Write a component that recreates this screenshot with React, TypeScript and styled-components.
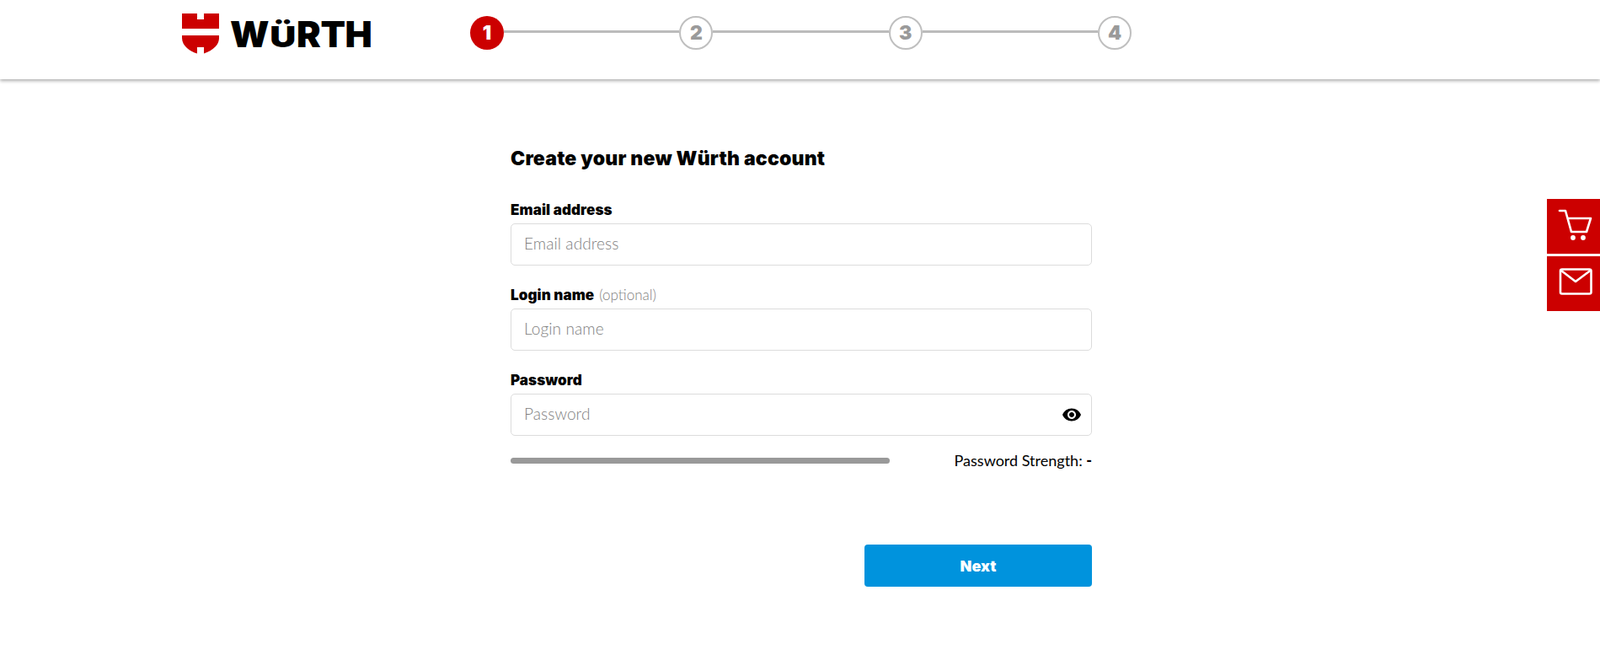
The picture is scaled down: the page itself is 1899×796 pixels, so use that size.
import React from "react";
import styled, { createGlobalStyle } from "styled-components";

const Global = createGlobalStyle`
  html, body { margin: 0; padding: 0; background: #fff; }
  body { font-family: "Lato", "Open Sans", sans-serif; color: #000; }
  * { box-sizing: border-box; }
`;

const Header = styled.header`
  height: 94px;
  display: flex;
  align-items: flex-start;
  padding: 16px 0 0 216px;
  background: #fff;
  box-shadow: 0 2px 4px rgba(0, 0, 0, 0.32);
`;

const Logo = styled.div`
  width: 342px;
  display: flex;
  align-items: flex-start;
  gap: 13px;
`;

const Wordmark = styled.div`
  display: flex;
  height: 31px;
  margin-top: 9px;
  font-family: "Inter", sans-serif;
  font-weight: 900;
  font-size: 43px;
  line-height: 31px;
  letter-spacing: -0.3px;
`;

const Umlaut = styled.span`
  display: inline-block;
  transform: scaleY(0.8);
  transform-origin: 50% 100%;
  margin: 0 1px;
`;

const Stepper = styled.ol`
  list-style: none;
  margin: 3px 0 0;
  padding: 0;
  display: flex;
  align-items: flex-start;
`;

const Step = styled.li<{ $active?: boolean }>`
  width: 40px;
  height: 40px;
  border-radius: 50%;
  display: flex;
  align-items: center;
  justify-content: center;
  font-family: "Inter", sans-serif;
  font-weight: 900;
  font-size: 23px;
  background: ${(p) => (p.$active ? "#cc0000" : "#fff")};
  color: ${(p) => (p.$active ? "#fff" : "#9a9a9a")};
  border: ${(p) => (p.$active ? "none" : "2px solid #bfbfbf")};
`;

const Connector = styled.li`
  width: 208.4px;
  height: 3px;
  margin-top: 17px;
  background: #bbbbbb;
`;

const Main = styled.main`
  width: 690px;
  margin: 0 0 0 606px;
  padding-top: 79px;
`;

const Title = styled.h1`
  margin: 0 0 35px;
  font-family: "Inter", sans-serif;
  font-size: 23px;
  line-height: 30px;
  font-weight: 900;
  letter-spacing: 0.2px;
`;

const Field = styled.div`
  margin-bottom: 24px;
`;

const Label = styled.label`
  display: block;
  height: 27px;
  font-family: "Inter", sans-serif;
  font-size: 17px;
  line-height: 22px;
  font-weight: 900;
  letter-spacing: 0.1px;
`;

const Optional = styled.span`
  font-family: "Lato", sans-serif;
  font-size: 17px;
  font-weight: 300;
  color: #808080;
  margin-left: 6px;
  letter-spacing: 0;
`;

const InputBox = styled.div`
  height: 50px;
  display: flex;
  align-items: center;
  padding: 0 11px 3px 15px;
  border: 1px solid #dcdcdc;
  border-radius: 5px;
`;

const Input = styled.input`
  flex: 1;
  min-width: 0;
  border: 0;
  outline: 0;
  padding: 0;
  background: transparent;
  font-family: inherit;
  font-size: 19px;
  font-weight: 300;
  letter-spacing: 0.1px;
  color: #000;
  &::placeholder { color: #808080; opacity: 1; }
`;

const EyeSlot = styled.span`
  display: flex;
  margin-bottom: -3px;
`;

const StrengthRow = styled.div`
  margin-top: -6px;
  display: flex;
  align-items: center;
  justify-content: space-between;
  height: 22px;
`;

const StrengthBar = styled.div`
  width: 450px;
  height: 7px;
  border-radius: 4px;
  background: #999;
`;

const StrengthText = styled.div`
  font-size: 18px;
  font-weight: 400;
  line-height: 20px;
  letter-spacing: 0;
  b { font-weight: 900; }
`;

const Actions = styled.div`
  margin-top: 89px;
  display: flex;
  justify-content: flex-end;
`;

const NextButton = styled.button`
  width: 270px;
  height: 50px;
  border: 0;
  border-radius: 4px;
  background: #0093dd;
  color: #fff;
  font-family: "Inter", sans-serif;
  font-size: 18px;
  font-weight: 900;
`;

const SideRail = styled.aside`
  position: fixed;
  top: 236px;
  right: 0;
  display: flex;
  flex-direction: column;
  gap: 3px;
`;

const SideButton = styled.div`
  width: 63px;
  height: 65px;
  background: #cc0000;
  svg { display: block; }
`;

const WurthShield = () => (
  <svg width="44" height="48" viewBox="216 16 44 48" aria-hidden="true">
    <path fill="#cc0000" d="M216 16H234V23H242V16H260V34H216Z" />
    <path fill="#cc0000" d="M216 42H260V45C260 55 250 61 242 63.5V56H234V63.5C226 61 216 55 216 45Z" />
  </svg>
);

const EyeIcon = () => (
  <svg width="24" height="24" viewBox="0 0 24 24" aria-hidden="true">
    <path
      fill="#000"
      d="M12 4.5C7 4.5 2.73 7.61 1 12c1.73 4.39 6 7.5 11 7.5s9.27-3.11 11-7.5c-1.73-4.39-6-7.5-11-7.5zM12 17c-2.76 0-5-2.24-5-5s2.24-5 5-5 5 2.24 5 5-2.24 5-5 5zm0-8c-1.66 0-3 1.34-3 3s1.34 3 3 3 3-1.34 3-3-1.34-3-3-3z"
    />
  </svg>
);

const CartIcon = () => (
  <svg width="63" height="65" viewBox="0 0 63 65" fill="none" stroke="#fff" strokeWidth="2.6" strokeLinejoin="round" strokeLinecap="round">
    <path d="M15 14H22L29 39H47L52 23H24.5" />
    <circle cx="31" cy="46" r="1.6" fill="#fff" />
    <circle cx="43" cy="46" r="1.6" fill="#fff" />
  </svg>
);

const MailIcon = () => (
  <svg width="63" height="65" viewBox="0 0 63 65" fill="none" stroke="#fff" strokeWidth="2.6" strokeLinejoin="round" strokeLinecap="round">
    <rect x="16" y="15.5" width="36.5" height="29" rx="2" />
    <path d="M17 17L34 30L51.5 17" />
  </svg>
);

export default function App() {
  return (
    <>
      <Global />
      <Header>
        <Logo>
          <WurthShield />
          <Wordmark>
            W<Umlaut>Ü</Umlaut>RTH
          </Wordmark>
        </Logo>
        <Stepper>
          <Step $active>1</Step>
          <Connector />
          <Step>2</Step>
          <Connector />
          <Step>3</Step>
          <Connector />
          <Step>4</Step>
        </Stepper>
      </Header>
      <Main>
        <Title>Create your new Würth account</Title>
        <Field>
          <Label>Email address</Label>
          <InputBox>
            <Input placeholder="Email address" />
          </InputBox>
        </Field>
        <Field>
          <Label>
            Login name<Optional>(optional)</Optional>
          </Label>
          <InputBox>
            <Input placeholder="Login name" />
          </InputBox>
        </Field>
        <Field>
          <Label>Password</Label>
          <InputBox>
            <Input placeholder="Password" />
            <EyeSlot>
              <EyeIcon />
            </EyeSlot>
          </InputBox>
        </Field>
        <StrengthRow>
          <StrengthBar />
          <StrengthText>
            Password Strength: <b>-</b>
          </StrengthText>
        </StrengthRow>
        <Actions>
          <NextButton>Next</NextButton>
        </Actions>
      </Main>
      <SideRail>
        <SideButton>
          <CartIcon />
        </SideButton>
        <SideButton>
          <MailIcon />
        </SideButton>
      </SideRail>
    </>
  );
}
